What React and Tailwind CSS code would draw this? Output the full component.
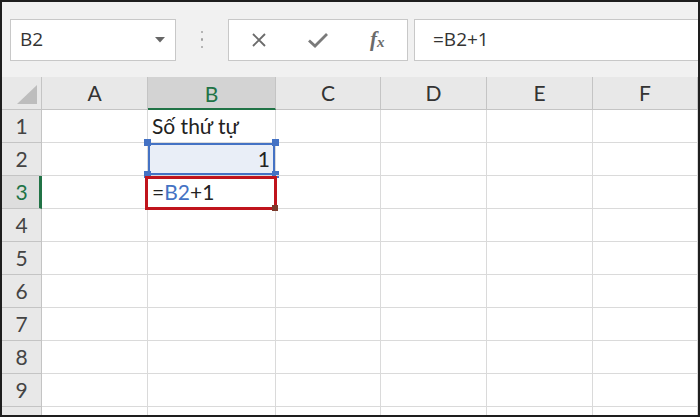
import React from 'react';

const cols = [
  { label: 'A', w: 'w-[106px]' },
  { label: 'B', w: 'w-[128px]' },
  { label: 'C', w: 'w-[105px]' },
  { label: 'D', w: 'w-[106px]' },
  { label: 'E', w: 'w-[106px]' },
  { label: 'F', w: 'w-[105px]' },
];

// row 10 only peeks out at the bottom edge, so its number isn't shown
const rows = [1, 2, 3, 4, 5, 6, 7, 8, 9, 10];

const Toolbar = () => (
  <div className="flex h-[75px] shrink-0 items-center bg-[#f1f1f1] pl-[8px] [font-family:'Open_Sans',sans-serif] text-[#333]">
    {/* name box */}
    <div className="flex h-[42px] w-[166px] items-center justify-between border border-[#c8c8c8] bg-white pl-[9px] pr-[10px]">
      <span className="text-[19px]">B2</span>
      <svg width="10" height="6" viewBox="0 0 10 6">
        <path d="M0 0 L10 0 L5 5.5 Z" fill="#666" />
      </svg>
    </div>

    <div className="flex w-[52px] flex-col items-center gap-[5px]">
      <span className="h-[2.5px] w-[2.5px] rounded-full bg-[#a0a0a0]" />
      <span className="h-[2.5px] w-[2.5px] rounded-full bg-[#a0a0a0]" />
      <span className="h-[2.5px] w-[2.5px] rounded-full bg-[#a0a0a0]" />
    </div>

    {/* cancel / enter / insert function */}
    <div className="flex h-[42px] w-[180px] items-center border border-[#c8c8c8] bg-white">
      <div className="flex w-[60px] justify-center">
        <svg width="16" height="16" viewBox="0 0 16 16">
          <path d="M2 2 L14 14 M14 2 L2 14" stroke="#6b6b6b" strokeWidth="1.9" />
        </svg>
      </div>
      <div className="flex w-[60px] justify-center">
        <svg width="22" height="16" viewBox="0 0 22 16">
          <path d="M2 8.5 L8 14 L20 2" stroke="#7a7a7a" strokeWidth="2.8" fill="none" />
        </svg>
      </div>
      <div className="flex w-[60px] justify-center [font-family:'Liberation_Serif',serif] font-bold italic text-[#6b6b6b]">
        <span className="text-[21px] leading-none">f</span>
        <span className="mt-[6px] text-[15px] leading-none">x</span>
      </div>
    </div>

    {/* formula input */}
    <div className="ml-[6px] flex h-[42px] flex-1 items-center border border-r-0 border-[#c8c8c8] bg-white pl-[18px]">
      <span className="text-[19px]">=B2+1</span>
    </div>
  </div>
);

const HeaderRow = () => (
  <div className="flex h-[33px] shrink-0 bg-[#e8e8e8]">
    <div className="relative w-[40px] shrink-0 border-r border-b border-[#c4c4c4]">
      <svg className="absolute left-[15px] top-[8px]" width="20" height="19" viewBox="0 0 20 19">
        <path d="M20 0 L20 19 L0 19 Z" fill="#bdbdbd" />
      </svg>
    </div>
    {cols.map((c) =>
      c.label === 'B' ? (
        <div
          key={c.label}
          className={`${c.w} flex shrink-0 items-center justify-center border-r border-[#c4c4c4] border-b-2 border-b-[#217346] bg-[#d3d3d3] pt-[2px] text-[21px] text-[#217346]`}
        >
          {c.label}
        </div>
      ) : (
        <div
          key={c.label}
          className={`${c.w} flex shrink-0 items-center justify-center border-r border-b border-[#c4c4c4] text-[21px] text-[#333]`}
        >
          {c.label}
        </div>
      )
    )}
  </div>
);

const Cell = ({ col, row }) => {
  const base = `${col.w} relative flex h-full shrink-0 items-center border-r border-b border-[#dadada] px-[4px] text-[21px] text-[#222]`;

  if (col.label === 'B' && row === 1) {
    return <div className={base}>Số thứ tự</div>;
  }

  if (col.label === 'B' && row === 2) {
    return (
      <div className={`${base} justify-end bg-[#e9eef7]`}>
        <span className="pr-[1px]">1</span>
        <div className="pointer-events-none absolute inset-x-0 top-0 bottom-0 border-2 border-[#4472c4]" />
        <span className="absolute -left-[4px] -top-[4px] h-[7px] w-[7px] bg-[#4472c4]" />
        <span className="absolute -right-[4px] -top-[4px] h-[7px] w-[7px] bg-[#4472c4]" />
        <span className="absolute -bottom-[3px] -left-[4px] h-[7px] w-[7px] bg-[#4472c4]" />
        <span className="absolute -bottom-[3px] -right-[4px] h-[7px] w-[7px] bg-[#4472c4]" />
      </div>
    );
  }

  if (col.label === 'B' && row === 3) {
    return (
      <div className={base}>
        <span>
          =<span className="text-[#4472c4]">B2</span>+1
        </span>
        <div className="pointer-events-none absolute -left-[3px] -right-[2px] top-0 -bottom-[2px] z-10 border-[3px] border-[#c0141c]" />
        <span className="absolute -bottom-[3px] -right-[3px] z-10 h-[6px] w-[6px] bg-[#7b3a2c]" />
      </div>
    );
  }

  return <div className={base} />;
};

const GridRow = ({ row }) => (
  <div className="flex h-[33px] shrink-0">
    {row === 3 ? (
      <div className="flex w-[40px] shrink-0 items-center justify-center border-b border-r-[3px] border-[#c4c4c4] border-r-[#217346] bg-[#dedede] pl-[2px] text-[21px] text-[#217346]">
        {row}
      </div>
    ) : (
      <div className="flex w-[40px] shrink-0 items-center justify-center border-r border-b border-[#c4c4c4] bg-[#e8e8e8] text-[21px] text-[#444]">
        {row < 10 ? row : null}
      </div>
    )}
    {cols.map((c) => (
      <Cell key={c.label} col={c} row={row} />
    ))}
  </div>
);

export default function App() {
  return (
    <div className="h-[417px] w-[700px] overflow-hidden border-2 border-[#1e1e1e] bg-white">
      <div className="flex h-full flex-col overflow-hidden">
        <Toolbar />
        <div className="flex shrink-0 flex-col [font-family:'Lato',sans-serif]">
          <HeaderRow />
          {rows.map((r) => (
            <GridRow key={r} row={r} />
          ))}
        </div>
      </div>
    </div>
  );
}
